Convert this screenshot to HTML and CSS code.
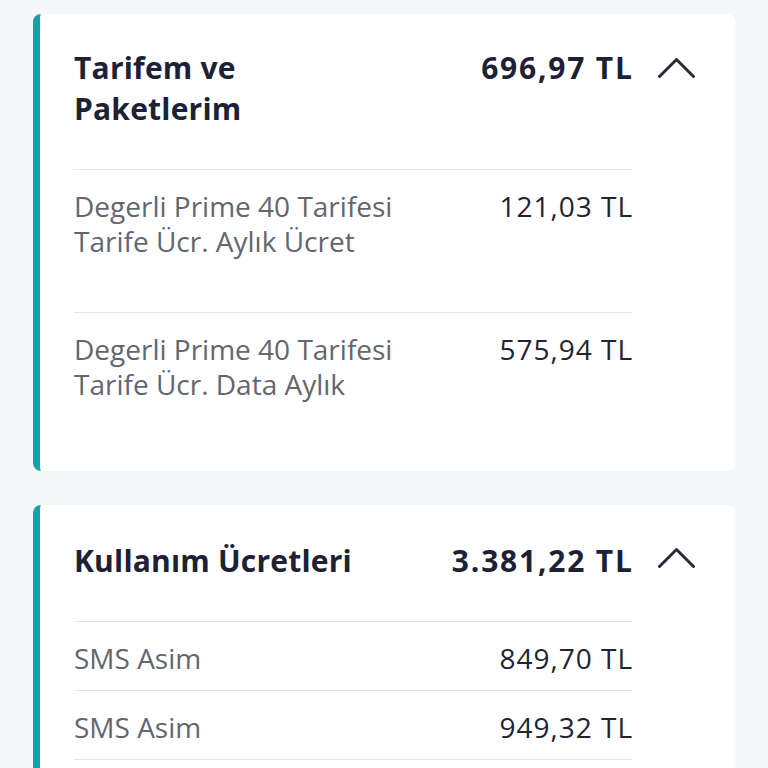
FILE: index.html
```html
<!DOCTYPE html>
<html lang="tr">
<head>
<meta charset="utf-8">
<title>Fatura Detayı</title>
<link rel="stylesheet" href="styles.css">
</head>
<body>
<main class="page">
  <section class="card">
    <header class="card-head">
      <h2 class="card-title">Tarifem ve<br>Paketlerim</h2>
      <span class="card-total">696,97 TL</span>
      <span class="chevron-box">
        <svg class="chevron" width="37" height="21" viewBox="0 0 37 21"><polyline points="1.5,19.5 18.5,2.5 35.5,19.5" fill="none" stroke="#262a39" stroke-width="3" stroke-linecap="round" stroke-linejoin="round"/></svg>
      </span>
    </header>
    <div class="card-body">
      <div class="row row-tall">
        <div class="row-label">Degerli Prime 40 Tarifesi<br>Tarife Ücr. Aylık Ücret</div>
        <div class="row-value">121,03 TL</div>
      </div>
      <div class="row row-tall">
        <div class="row-label">Degerli Prime 40 Tarifesi<br>Tarife Ücr. Data Aylık</div>
        <div class="row-value">575,94 TL</div>
      </div>
    </div>
  </section>

  <section class="card">
    <header class="card-head card-head-single">
      <h2 class="card-title">Kullanım Ücretleri</h2>
      <span class="card-total">3.381,22 TL</span>
      <span class="chevron-box">
        <svg class="chevron" width="37" height="21" viewBox="0 0 37 21"><polyline points="1.5,19.5 18.5,2.5 35.5,19.5" fill="none" stroke="#262a39" stroke-width="3" stroke-linecap="round" stroke-linejoin="round"/></svg>
      </span>
    </header>
    <div class="card-body">
      <div class="row row-short">
        <div class="row-label">SMS Asim</div>
        <div class="row-value">849,70 TL</div>
      </div>
      <div class="row row-short">
        <div class="row-label">SMS Asim</div>
        <div class="row-value">949,32 TL</div>
      </div>
    </div>
  </section>
</main>
</body>
</html>
```

FILE: styles.css
```css
html, body {
  margin: 0;
  padding: 0;
  background: #f6f7f9;
  font-family: "Open Sans", Lato, sans-serif;
  color: #1d2134;
}

.page {
  height: 768px;
  overflow: hidden;
  padding: 14px 33px 0 33px;
  box-sizing: border-box;
  display: flex;
  flex-direction: column;
  gap: 34px;
}

.card {
  background: #ffffff;
  border-left: 7px solid #14a2aa;
  border-radius: 8px;
  padding: 0 0 16px 34px;
  flex-shrink: 0;
}

.card-head {
  display: flex;
  align-items: flex-start;
  padding: 33px 0 40px 0;
  border-bottom: 1.5px solid #e4e5e8;
  margin-right: 103px;
  position: relative;
}

.card-head-single {
  padding-top: 35px;
}

.card-title {
  flex: 1;
  margin: 0;
  font-size: 30px;
  line-height: 41px;
  font-weight: 700;
  letter-spacing: 0.2px;
  color: #1d2134;
}

.card-total {
  font-size: 30px;
  line-height: 41px;
  font-weight: 700;
  letter-spacing: 1.8px;
  margin-right: -1.8px;
  color: #1d2134;
}

.chevron-box {
  position: absolute;
  right: -103px;
  top: 33px;
  width: 103px;
  height: 41px;
  display: flex;
  align-items: center;
}

.card-head-single .chevron-box {
  top: 32px;
}

.chevron {
  margin-left: 26px;
  display: block;
}

.card-body {
  margin-right: 103px;
}

.row {
  display: flex;
  align-items: flex-start;
  justify-content: space-between;
  font-size: 28px;
  line-height: 35px;
}

.row-tall {
  padding: 19px 0 53px 0;
}

.row-tall + .row-tall {
  border-top: 1.5px solid #e4e5e8;
}

.row-short {
  padding: 19px 0 14px 0;
  border-bottom: 1.5px solid #e4e5e8;
}

.row-label {
  color: #62666f;
  font-weight: 400;
}

.row-value {
  color: #1f2334;
  font-weight: 400;
  letter-spacing: 1px;
  margin-right: -1px;
  white-space: nowrap;
}
```
